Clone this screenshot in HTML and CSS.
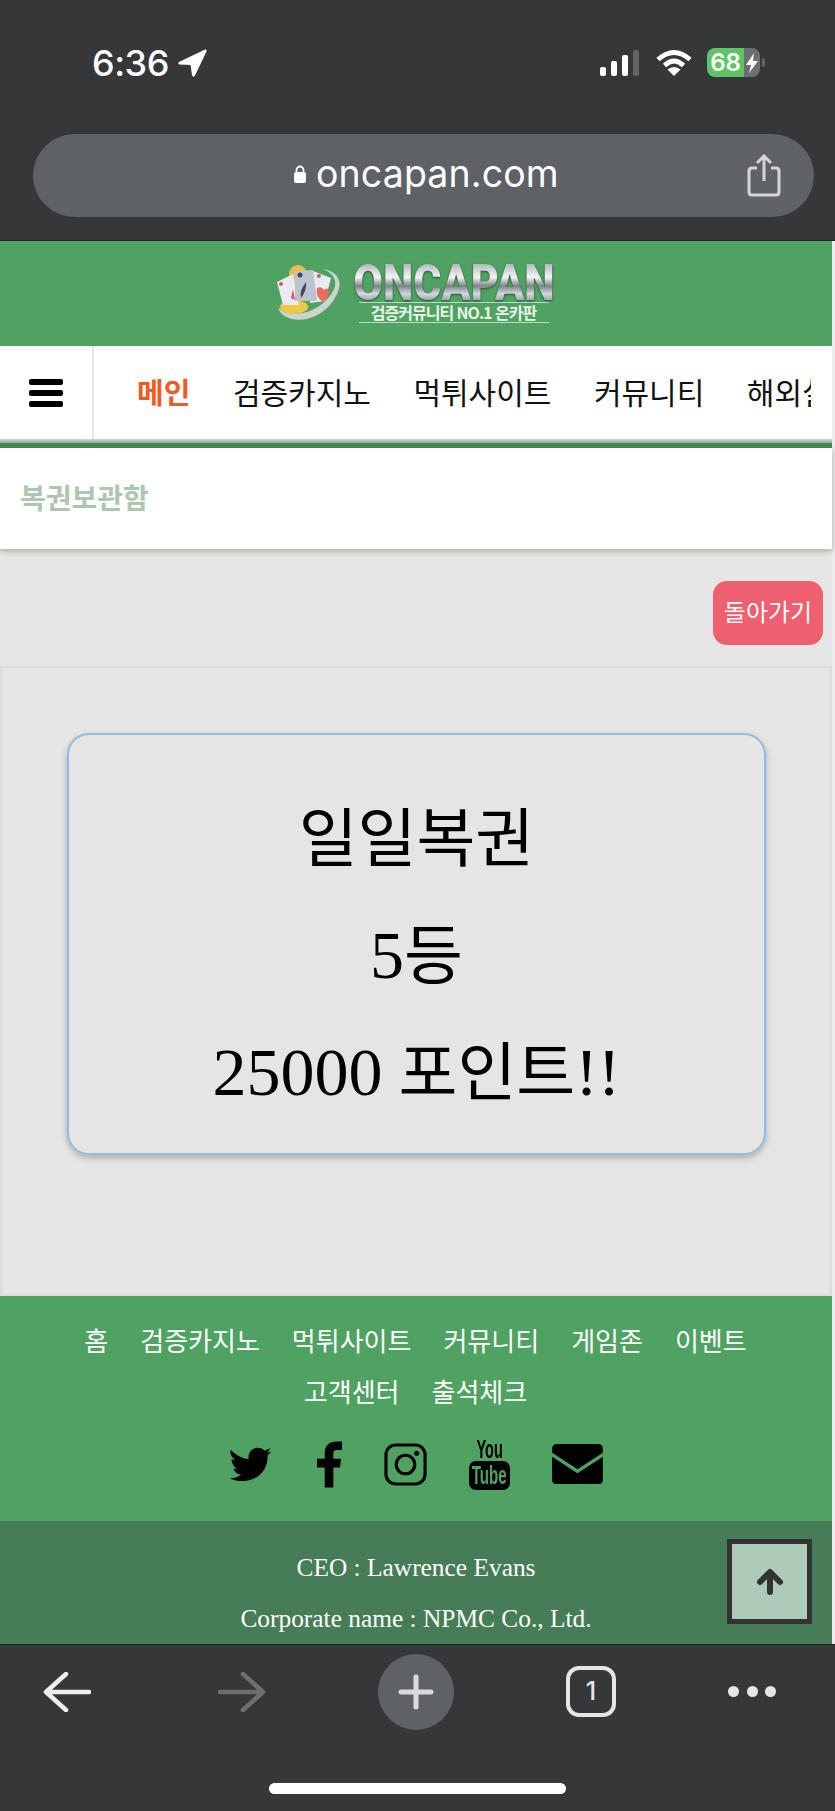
FILE: index.html
```html
<!DOCTYPE html>
<html lang="ko">
<head>
    <meta charset="UTF-8">
    <meta name="viewport" content="width=device-width, initial-scale=1.0">
    <title>oncapan.com</title>
    <link rel="stylesheet" href="styles.css">
</head>
<body>
    <div class="phone">
        <!-- browser top -->
        <div class="top-chrome">
            <div class="status-bar">
                <div class="status-left">
                    <span class="clock">6:36</span>
                    <svg class="location" viewBox="0 0 29 28" width="29" height="28"><path d="M27 0.500 Q29 0 28.500 2.500 L17 26.500 Q15 29 14 26 L12.500 16 L1.500 15.500 Q-0.500 14.500 1 13 Z" fill="#fff"/></svg>
                </div>
                <div class="status-right">
                    <div class="signal">
                        <span class="bar bar1"></span>
                        <span class="bar bar2"></span>
                        <span class="bar bar3"></span>
                        <span class="bar bar4"></span>
                    </div>
                    <svg class="wifi" viewBox="0 0 36 27" width="36" height="27">
                        <path d="M2 10.500 Q18 -3.500 34 10.500" fill="none" stroke="#fff" stroke-width="4.800"/>
                        <path d="M8.500 16.500 Q18 7.500 27.500 16.500" fill="none" stroke="#fff" stroke-width="4.800"/>
                        <path d="M18 27 L11.500 20.500 Q18 15.500 24.500 20.500 Z" fill="#fff"/>
                    </svg>
                    <div class="battery">
                        <div class="battery-body">
                            <span class="battery-level">68</span>
                            <svg class="bolt" viewBox="0 0 12 20" width="12" height="20"><path d="M8 0 L0 12 L5 12 L3 20 L12 8 L7 8 Z" fill="#fff"/></svg>
                        </div>
                        <span class="battery-cap"></span>
                    </div>
                </div>
            </div>
            <div class="url-bar">
                <div class="url">
                    <svg viewBox="0 0 14 20" width="14" height="20"><path d="M3.500 9 V6 a3.500 3.500 0 0 1 7 0 V9" fill="none" stroke="#fff" stroke-width="1.800"/><rect x="1" y="8" width="12" height="11" rx="2" fill="#fff"/></svg>
                    <span>oncapan.com</span>
                </div>
                <svg class="share" viewBox="0 0 34 43" width="34" height="43">
                    <path d="M10 14 H5 Q2 14 2 17 V38 Q2 41 5 41 H29 Q32 41 32 38 V17 Q32 14 29 14 H24" fill="none" stroke="#d4d5d7" stroke-width="3"/>
                    <path d="M17 27 V3 M10 9 L17 2 L24 9" fill="none" stroke="#d4d5d7" stroke-width="3"/>
                </svg>
            </div>
        </div>

        <!-- site -->
        <div class="site">
            <header class="logo-row">
                <div class="logo">
                    <svg class="logo-mark" viewBox="0 0 65 58" width="65" height="58">
                        <circle cx="21" cy="9" r="9" fill="#e9c04a"/>
                        <ellipse cx="17" cy="42" rx="14" ry="7" fill="#eec93f"/>
                        <path d="M0 17 L16 9 L22 40 L6 40 Z" fill="#e8ebf3"/>
                        <path d="M36 6 L54 13 L48 36 L33 38 Z" fill="#e8ebf3"/>
                        <path d="M18 6 L36 5 L40 36 L18 36 Z" fill="#bcc3cf"/>
                        <circle cx="23" cy="10" r="2.500" fill="#3e4660"/>
                        <path d="M29 17 Q30 25 24 33 Q22 26 29 17 Z" fill="#3e4660"/>
                        <path d="M40 23 Q45 21 47 25 Q50 22 52 25 Q52 32 46 37 Q38 32 40 23 Z" fill="#ec6a5e"/>
                        <circle cx="4" cy="19" r="2" fill="#e2534d"/>
                        <path d="M16 24 L18 35 L14 33 Z" fill="#e2534d"/>
                        <circle cx="42" cy="11" r="2" fill="#e2534d"/>
                        <path d="M1 42 C4 58 38 62 56 36 C66 22 66 8 46 4 C60 10 62 20 52 32 C38 50 10 54 1 42 Z" fill="#cfd3cf"/>
                    </svg>
                    <div class="logo-text">
                        <span class="logo-name">ONCAPAN</span>
                        <span class="logo-sub">검증커뮤니티 NO.1 온카판</span>
                    </div>
                </div>
            </header>

            <nav class="main-nav">
                <div class="hamburger">
                    <span></span><span></span><span></span>
                </div>
                <div class="nav-scroll">
                    <a class="nav-item active">메인</a>
                    <a class="nav-item">검증카지노</a>
                    <a class="nav-item">먹튀사이트</a>
                    <a class="nav-item">커뮤니티</a>
                    <a class="nav-item">해외실시간</a>
                </div>
            </nav>
            <div class="nav-line"></div>

            <div class="page-title">복권보관함</div>

            <main class="content">
                <div class="back-row">
                    <a class="back-btn">돌아가기</a>
                </div>
                <section class="ticket-panel">
                    <div class="ticket">
                        <p>일일복권</p>
                        <p><span class="latin">5</span>등</p>
                        <p><span class="latin">25000</span> 포인트<span class="latin">!!</span></p>
                    </div>
                </section>
            </main>

            <footer class="footer">
                <div class="footer-links">
                    <a>홈</a><a>검증카지노</a><a>먹튀사이트</a><a>커뮤니티</a><a>게임존</a><a>이벤트</a><a>고객센터</a><a>출석체크</a>
                </div>
                <div class="social">
                    <svg class="twitter" viewBox="0 0 44 38" width="43" height="36"><path d="M1 4 C7 10 13 13 20 14 C19 7 24 1 31 2 C34 2 36 4 37 5 L43 2 L40 7 L44 6 L40 10 C41 24 30 37 14 37 C9 37 4 36 0 34 C5 34 9 33 12 30 C8 30 5 27 4 24 L8 24 C4 22 2 18 2 14 L6 15 C2 12 0 8 1 4 Z" fill="#000"/></svg>
                    <svg viewBox="0 0 26 48" width="25" height="47"><path d="M8 48 V27 H0 V18 H8 V12 C8 4 13 0 20 0 H26 V9 H21 C18 9 17 10 17 13 V18 H25 L24 27 H17 V48 Z" fill="#000"/></svg>
                    <svg viewBox="0 0 44 44" width="43" height="43"><rect x="2" y="2" width="40" height="40" rx="10" fill="none" stroke="#000" stroke-width="3.200"/><circle cx="22" cy="22" r="9.500" fill="none" stroke="#000" stroke-width="3.200"/><circle cx="33.500" cy="10.500" r="2.600" fill="#000"/></svg>
                    <div class="youtube">
                        <span class="yt-you">You</span>
                        <div class="yt-box"><span class="yt-tube">Tube</span></div>
                    </div>
                    <svg viewBox="0 0 52 41" width="51" height="40"><path d="M5 0 H47 Q52 0 52 5 V9 L26 26 L0 9 V5 Q0 0 5 0 Z" fill="#000"/><path d="M0 13 L26 30 L52 13 V37 Q52 41 48 41 H4 Q0 41 0 37 Z" fill="#000"/></svg>
                </div>
            </footer>

            <div class="company">
                <p>CEO : Lawrence Evans</p>
                <p>Corporate name : NPMC Co., Ltd.</p>
                <a class="to-top">
                    <svg viewBox="0 0 28 27" width="28" height="27"><path d="M14 24 V5 M4 14 L14 4 L24 14" fill="none" stroke="#333" stroke-width="6" stroke-linecap="round" stroke-linejoin="round"/></svg>
                </a>
            </div>
        </div>

        <!-- browser bottom -->
        <div class="bottom-chrome">
            <div class="toolbar">
                <svg viewBox="0 0 48 40" width="48" height="40"><path d="M46 20 H4 M23 2 L3 20 L23 38" fill="none" stroke="#eeeeef" stroke-width="4.500" stroke-linecap="round" stroke-linejoin="round"/></svg>
                <svg class="forward" viewBox="0 0 48 40" width="48" height="40"><path d="M2 20 H44 M25 2 L45 20 L25 38" fill="none" stroke="#6d6e70" stroke-width="4.500" stroke-linecap="round" stroke-linejoin="round"/></svg>
                <div class="new-tab">
                    <svg viewBox="0 0 36 36" width="36" height="36"><path d="M18 3 V33 M3 18 H33" stroke="#d9dadb" stroke-width="5" stroke-linecap="round"/></svg>
                </div>
                <div class="tab-count">1</div>
                <div class="more"><span></span><span></span><span></span></div>
            </div>
            <div class="home-indicator"></div>
        </div>
    </div>
</body>
</html>
```
FILE: styles.css
```css
* {
    box-sizing: border-box;
}
body {
    margin: 0;
    background-color: #363739;
    font-family: "Noto Sans CJK KR", "Liberation Sans", sans-serif;
}
p {
    margin: 0;
}
.phone {
    width: 835px;
    height: 1811px;
    display: flex;
    flex-direction: column;
    overflow: hidden;
}

/* browser top */
.top-chrome {
    height: 241px;
    padding-top: 45px;
    background-color: #363739;
    border-bottom: 1px solid #222;
}
.status-bar {
    height: 35px;
    padding: 0 70px 0 92px;
    display: flex;
    justify-content: space-between;
    align-items: center;
    color: #fff;
}
.status-left {
    display: flex;
    align-items: center;
    gap: 9px;
}
.clock {
    font-family: Inter, sans-serif;
    font-size: 36px;
    font-weight: 500;
    letter-spacing: -0.5px;
}
.status-right {
    display: flex;
    align-items: center;
    gap: 15px;
}
.signal {
    display: flex;
    align-items: flex-end;
    gap: 5px;
    height: 26px;
    margin-right: 2px;
}
.bar {
    width: 6px;
    background-color: #fff;
    border-radius: 2px;
}
.bar1 { height: 9px; }
.bar2 { height: 15px; }
.bar3 { height: 21px; }
.bar4 { height: 26px; background-color: #636466; }
.battery {
    display: flex;
    align-items: center;
    gap: 2px;
}
.battery-body {
    width: 53px;
    height: 29px;
    border-radius: 8px;
    display: flex;
    align-items: center;
    gap: 2px;
    background: linear-gradient(to right, #5fc464 0, #5fc464 37px, #6d6e70 37px);
    color: #fff;
}
.battery-level {
    width: 37px;
    text-align: center;
    font-family: Inter, sans-serif;
    font-size: 24px;
    font-weight: 600;
    line-height: 29px;
}
.battery-cap {
    width: 3px;
    height: 9px;
    background-color: #636466;
    border-radius: 0 3px 3px 0;
}
.url-bar {
    height: 83px;
    margin: 54px 21px 0 33px;
    padding-right: 33px;
    background-color: #5e6165;
    border-radius: 42px;
    display: flex;
    align-items: center;
    justify-content: flex-end;
    position: relative;
}
.url {
    position: absolute;
    left: 260px;
    top: 17px;
    display: flex;
    align-items: center;
    gap: 9px;
    color: #fff;
    font-family: Inter, sans-serif;
    font-size: 37.5px;
    letter-spacing: 0.1px;
}

/* site */
.site {
    border-right: 3px solid #ececec;
}
.logo-row {
    height: 105px;
    background-color: #4fa262;
    display: flex;
    justify-content: center;
    align-items: center;
}
.logo {
    display: flex;
    align-items: center;
    gap: 13px;
    margin-right: 3px;
}
.logo-text {
    width: 197px;
    display: flex;
    flex-direction: column;
    align-items: center;
}
.logo-name {
    height: 38px;
    font-family: Roboto, sans-serif;
    font-size: 50px;
    font-weight: 900;
    line-height: 38px;
    white-space: nowrap;
    transform: scaleX(0.86);
    background: linear-gradient(to bottom, #b4b9bf 0, #f3f4f6 35%, #7c838b 58%, #d5d8dc 78%, #8f98a3 100%);
    -webkit-background-clip: text;
    background-clip: text;
    color: transparent;
    filter: drop-shadow(0 1px 1px rgba(30, 40, 30, 0.7));
}
.logo-sub {
    width: 190px;
    border-top: 1px solid #bcdcc4;
    border-bottom: 1px solid #bcdcc4;
    text-align: center;
    color: #e9f3ea;
    font-size: 16px;
    font-weight: 700;
    line-height: 19px;
    white-space: nowrap;
    letter-spacing: -1px;
}

/* nav */
.main-nav {
    height: 93px;
    background-color: #fff;
    display: flex;
}
.hamburger {
    width: 94px;
    border-right: 2px solid #e8e8e8;
    display: flex;
    flex-direction: column;
    justify-content: center;
    align-items: center;
    gap: 5px;
}
.hamburger span {
    width: 34px;
    height: 6px;
    background-color: #000;
    border-radius: 2px;
}
.nav-scroll {
    width: 717px;
    padding: 0 0 3px 43px;
    display: flex;
    align-items: center;
    gap: 42.5px;
    overflow: hidden;
    white-space: nowrap;
}
.nav-item {
    font-size: 30px;
    color: #111;
}
.nav-item.active {
    color: #ee5a26;
    font-size: 29px;
    font-weight: 700;
}
.nav-line {
    height: 9px;
    background: linear-gradient(to bottom, #d6dbd7 0, #8fa693 4px, #438c52 4px);
}
.page-title {
    height: 101px;
    padding-left: 20px;
    background-color: #fff;
    color: #adc6b0;
    font-size: 28px;
    font-weight: 700;
    line-height: 98px;
    box-shadow: 0 2px 6px rgba(80, 80, 50, 0.4);
    position: relative;
}

/* content */
.content {
    height: 747px;
    background-color: #e5e5e5;
    display: flex;
    flex-direction: column;
}
.back-row {
    height: 117px;
    padding: 32px 9px 0 0;
    display: flex;
    justify-content: flex-end;
}
.back-btn {
    width: 110px;
    height: 64px;
    background-color: #ee5f6f;
    border-radius: 14px;
    color: #fff;
    font-size: 24px;
    line-height: 60px;
    text-align: center;
    white-space: nowrap;
}
.ticket-panel {
    flex: 1;
    border: 2px solid #dcdcdc;
    padding: 65px 64px 0 65px;
}
.ticket {
    height: 422px;
    border: 2px solid #8fbde2;
    border-radius: 22px;
    box-shadow: 0 3px 6px rgba(0, 0, 0, 0.25);
    padding-top: 46px;
    text-align: center;
    font-family: "Liberation Serif", "Noto Sans CJK KR", serif;
    font-size: 64px;
    line-height: 117px;
    color: #000;
}
.latin {
    font-size: 68px;
    line-height: 1;
}

/* footer */
.footer {
    height: 225px;
    background-color: #4fa262;
    padding-top: 18px;
}
.footer-links {
    display: flex;
    flex-wrap: wrap;
    justify-content: center;
    column-gap: 32px;
    padding: 0 71px 0 70px;
    line-height: 51px;
    font-size: 26px;
    color: #fff;
}
.footer-links a {
    white-space: nowrap;
}
.social {
    display: flex;
    justify-content: center;
    align-items: center;
    gap: 42px;
    height: 52px;
    margin-top: 22px;
}
.twitter {
    margin-right: 3px;
}
.youtube {
    width: 41px;
    height: 52px;
    display: flex;
    flex-direction: column;
    align-items: center;
    font-family: "Liberation Sans", sans-serif;
    font-weight: 700;
}
.yt-you {
    height: 23px;
    font-size: 26px;
    line-height: 22px;
    transform: scaleX(0.56);
    color: #000;
}
.yt-box {
    width: 41px;
    height: 29px;
    background-color: #000;
    border-radius: 7px;
    display: flex;
    justify-content: center;
    align-items: center;
}
.yt-tube {
    font-size: 26px;
    line-height: 29px;
    transform: scaleX(0.58);
    color: #4fa262;
}
.company {
    height: 123px;
    background-color: #467d56;
    padding-top: 21px;
    color: #fff;
    font-family: "Liberation Serif", serif;
    font-size: 25.4px;
    line-height: 51px;
    text-align: center;
    position: relative;
}
.to-top {
    position: absolute;
    right: 20px;
    top: 18px;
    width: 85px;
    height: 85px;
    background-color: #aecbb9;
    border: 5px solid #333;
    display: flex;
    align-items: center;
    justify-content: center;
}

/* browser bottom */
.bottom-chrome {
    flex: 1;
    background-color: #363739;
    border-top: 1px solid #222;
}
.toolbar {
    height: 93px;
    padding-left: 43px;
    display: flex;
    align-items: center;
    gap: 112px;
}
.forward {
    margin-left: 15px;
}
.new-tab {
    width: 76px;
    height: 76px;
    border-radius: 50%;
    background-color: #5e6165;
    display: flex;
    align-items: center;
    justify-content: center;
}
.tab-count {
    width: 50px;
    height: 51px;
    border: 4px solid #e6e6e7;
    border-radius: 13px;
    color: #e6e6e7;
    font-family: Inter, sans-serif;
    font-size: 25px;
    font-weight: 500;
    line-height: 43px;
    text-align: center;
}
.more {
    display: flex;
    gap: 7.500px;
}
.more span {
    width: 11px;
    height: 11px;
    border-radius: 50%;
    background-color: #e6e6e7;
}
.home-indicator {
    width: 297px;
    height: 11px;
    margin: 45px auto 0;
    background-color: #fff;
    border-radius: 6px;
}
```
